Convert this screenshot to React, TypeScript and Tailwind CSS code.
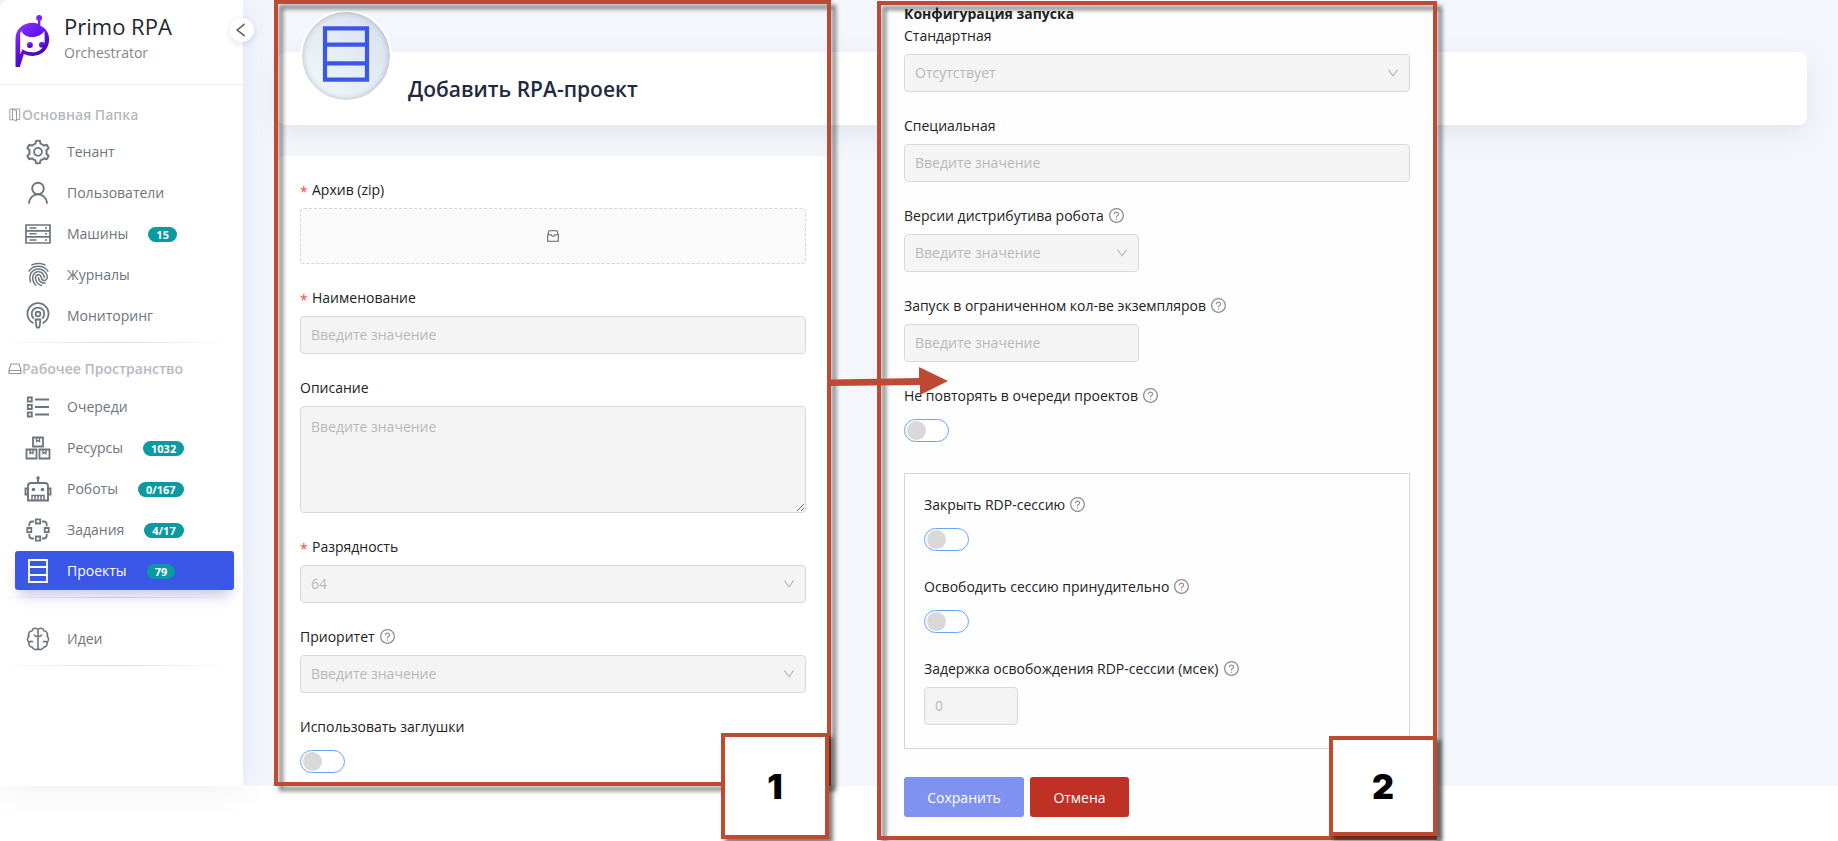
import React from "react";
import type { ReactNode } from "react";
import {
  AiOutlineDown,
  AiOutlineLeft,
  AiOutlineQuestionCircle,
  AiOutlineSetting,
} from "react-icons/ai";
import { IoFingerPrint } from "react-icons/io5";

const stroke = { fill: "none", stroke: "currentColor" } as const;

function Logo() {
  return (
    <svg viewBox="0 0 104 156" className="h-[52px] w-[35px] shrink-0" aria-hidden="true">
      <defs>
        <linearGradient id="logo" x1="0" y1="0" x2="0.5" y2="1">
          <stop offset="0" stopColor="#9a45ff" />
          <stop offset="0.55" stopColor="#6414f2" />
          <stop offset="1" stopColor="#3c05a8" />
        </linearGradient>
      </defs>
      <g fill="url(#logo)">
        <path
          fillRule="evenodd"
          d="M68.500 30V17A9 9 0 1 1 75.500 17V32C92 40 102 54 102 73c0 29-22 50-50 50-9 0-18-2-26-6l-12 39H1V72C1 42 24 23 52 23c6 0 11 1 16.500 3zM15 62v56l7-15c8 6 18 9 30 9 20 0 34-13 36-28 1-12 0-26 0-36C80 60 64 67 50 66 34 66 22 58 19 48c-3 3-4 8-4 14z"
        />
        <circle cx="44" cy="90" r="9" />
        <circle cx="80" cy="89" r="8.500" />
      </g>
    </svg>
  );
}

function UserIcon() {
  return (
    <svg viewBox="0 0 22 24" className="h-6 w-[22px]" strokeWidth="1.900" strokeLinecap="round" {...stroke}>
      <circle cx="11" cy="7.500" r="5.800" />
      <path d="M2 21.800c.6-5 4.400-8.500 9-8.500s8.400 3.500 9 8.500" />
    </svg>
  );
}

function RackIcon() {
  return (
    <svg viewBox="0 0 26 20" className="h-5 w-[26px]" strokeWidth="1.7" {...stroke}>
      <path d="M1 1h24v5.800H1zM1 6.800h24v6H1zM1 12.800h24V19H1z" />
      <path d="M4.500 3.900h7M4.500 9.800h7M4.500 15.900h7M20 3.900h2M20 9.800h2M20 15.900h2" strokeWidth="1.500" />
    </svg>
  );
}

function BeaconIcon() {
  return (
    <svg viewBox="0 0 26 28" className="h-7 w-[26px]" strokeWidth="1.8" {...stroke}>
      <path d="M8.500 21.200a10.500 10.500 0 1 1 9 0" />
      <path d="M8.700 16.500a6.300 6.300 0 1 1 8.600 0" />
      <circle cx="13" cy="12" r="2.400" />
      <path d="M10.600 17.500h4.800l-.8 7c-.3 1.600-2.900 1.600-3.200 0z" />
    </svg>
  );
}

function QueueIcon() {
  return (
    <svg viewBox="0 0 24 24" className="h-6 w-6" strokeWidth="1.8" {...stroke}>
      <path d="M1.800 2.500h4v4h-4zM1.800 10h4v4h-4zM1.800 17.500h4v4h-4z" />
      <path d="M9 4.500h14M9 12h14M9 19.500h14" />
    </svg>
  );
}

function BoxesIcon() {
  return (
    <svg viewBox="0 0 26 24" className="h-6 w-[26px]" strokeWidth="1.8" {...stroke}>
      <path d="M8 1.500h10v9H8zM1.500 13.500h10v9h-10zM14.500 13.500h10v9h-10z" />
      <path d="M11.500 2v3.500L13 4.500l1.500 1V2M5 14v3.500l1.500-1 1.500 1V14M18 14v3.500l1.500-1 1.500 1V14" strokeWidth="1.400" />
    </svg>
  );
}

function RobotIcon() {
  return (
    <svg viewBox="0 0 28 26" className="h-[26px] w-7" strokeWidth="1.9" {...stroke}>
      <path d="M14 2v5M7 7h14a3 3 0 0 1 3 3v14.500H4V10a3 3 0 0 1 3-3zM4 12.500H1.500v6H4M24 12.500h2.500v6H24" />
      <path d="M8 24v-4.500h12V24M11 20v4M14 20v4M17 20v4" strokeWidth="1.500" />
      <circle cx="14" cy="2" r="1.800" fill="currentColor" stroke="none" />
      <circle cx="9.500" cy="13.500" r="1.800" fill="currentColor" stroke="none" />
      <circle cx="18.500" cy="13.500" r="1.800" fill="currentColor" stroke="none" />
    </svg>
  );
}

function FlowIcon() {
  return (
    <svg viewBox="0 0 24 24" className="h-6 w-6" strokeWidth="1.8" {...stroke}>
      <path d="M9.800 1.300h4.400v4.200H9.800zM9.800 18.500h4.400v4.200H9.800zM1.300 10h4v4.200h-4zM18.700 10h4v4.200h-4z" />
      <path d="M8 3.500H6.300a3 3 0 0 0-3 3v1.700M16 3.500h1.700a3 3 0 0 1 3 3v1.700M8 20.500H6.300a3 3 0 0 1-3-3v-1.700M16 20.500h1.700a3 3 0 0 0 3-3v-1.700" />
    </svg>
  );
}

function ProjectIcon({ className }: { className: string }) {
  return (
    <svg viewBox="0 0 20 24" className={className} strokeWidth="1.800" {...stroke}>
      <path d="M1 1h18v22H1zM1 8h18M1 16h18" />
    </svg>
  );
}

function BrainIcon() {
  return (
    <svg viewBox="0 0 24 24" className="h-6 w-6" strokeWidth="1.6" strokeLinecap="round" strokeLinejoin="round" {...stroke}>
      <path d="M12 2.500v20M12 2.500C10.500.5 6.500.7 6 4 3 4 1.800 7 3 9c-2 1.500-2 5 0 6.500-.8 2.600 1 4.500 3.200 4.500.8 3 4.800 3.200 5.800 1.500M12 2.500C13.500.5 17.500.7 18 4c3 0 4.200 3 3 5 2 1.500 2 5 0 6.500.8 2.600-1 4.500-3.200 4.500-.8 3-4.800 3.200-5.800 1.500" />
      <path d="M12 9.500c-2.200 0-3 0-3.700-1.500M12 9.500c2.200 0 3 0 3.700-1.500M3 15.500c1-1 2.500-1.300 3.500-.8M21 15.500c-1-1-2.500-1.300-3.500-.8" />
    </svg>
  );
}

function MapIcon() {
  return (
    <svg viewBox="0 0 12 14" className="h-3.5 w-3" {...stroke}>
      <path d="M4.500 11.800H.8V1h9.900v10.500H7.500M3.500 1l4 2.200v10l-4-2zM7.500 8V2" strokeWidth=".9" />
    </svg>
  );
}

function DriveIcon() {
  return (
    <svg viewBox="0 0 14 12" className="h-3 w-3.5" {...stroke}>
      <path d="M3 1h8l2 6v3.500H1V7zM1 7.500h12" strokeWidth="1.100" />
    </svg>
  );
}

function InboxIcon() {
  return (
    <svg viewBox="0 0 12 12" className="h-3 w-3" {...stroke}>
      <path d="M2 .7h8L11.300 5v6.300H.7V5zM.7 4.700h3.200c.5 2 3.700 2 4.200 0h3.200" strokeWidth="1.100" />
    </svg>
  );
}

type Item = { name: string; icon: ReactNode; badge?: string; active?: boolean };

const folder: Item[] = [
  { name: "Тенант", icon: <AiOutlineSetting size={28} /> },
  { name: "Пользователи", icon: <UserIcon /> },
  { name: "Машины", icon: <RackIcon />, badge: "15" },
  { name: "Журналы", icon: <IoFingerPrint size={25} /> },
  { name: "Мониторинг", icon: <BeaconIcon /> },
];

const workspace: Item[] = [
  { name: "Очереди", icon: <QueueIcon /> },
  { name: "Ресурсы", icon: <BoxesIcon />, badge: "1032" },
  { name: "Роботы", icon: <RobotIcon />, badge: "0/167" },
  { name: "Задания", icon: <FlowIcon />, badge: "4/17" },
  { name: "Проекты", icon: <ProjectIcon className="h-6 w-5" />, badge: "79", active: true },
];

function NavItem({ name, icon, badge, active }: Item) {
  return (
    <li>
      <a
        href="#"
        className={
          "flex h-[39px] items-center rounded-[3px] pl-[9px] " +
          (active ? "bg-[#3b57e7] text-white shadow-[0_10px_14px_-4px_rgba(60,60,160,0.28)]" : "text-[#6d757d]")
        }
      >
        <span className="flex w-7 justify-center">{icon}</span>
        <span className="ml-[15px]">{name}</span>
        {badge && (
          <span className="mt-0.5 ml-5 rounded-full bg-[#0a9aa2] px-2 text-[11px] leading-[15px] font-bold text-white">
            {badge}
          </span>
        )}
      </a>
    </li>
  );
}

function Section({ icon, children }: { icon: ReactNode; children: string }) {
  return (
    <h2 className="flex h-6 items-center pl-2 font-semibold text-[#b3bac1]">
      <span className="flex w-3.5 justify-center pt-0.5 text-[#8f969d]">{icon}</span>
      {children}
    </h2>
  );
}

function Divider() {
  return <div className="mr-3 h-px bg-linear-to-r from-transparent via-[#dcdcdc] to-transparent" />;
}

function Sidebar() {
  return (
    <aside className="relative w-[243px] shrink-0 rounded-tl-lg bg-white shadow-[0_0_32px_rgba(70,70,150,0.10)]">
      <header className="flex h-[85px] items-start gap-3.5 border-b border-[#ececec] pt-[15px] pl-[15px]">
        <Logo />
        <div>
          <h1 className="text-[22px] leading-[22px] font-medium text-[#23272b]">Primo RPA</h1>
          <p className="mt-1.5 leading-5 text-[#858585]">Orchestrator</p>
        </div>
      </header>
      <button
        type="button"
        aria-label="Свернуть меню"
        className="absolute top-[18px] -right-[11px] flex size-6 items-center justify-center rounded-full bg-white pr-0.5 text-[#555] shadow-[0_2px_6px_rgba(70,70,150,0.18)]"
      >
        <AiOutlineLeft size={18} />
      </button>
      <nav className="pt-[17px]">
        <Section icon={<MapIcon />}>Основная Папка</Section>
        <ul className="mt-1.5 mr-[9px] ml-[15px] flex flex-col gap-0.5">
          {folder.map((item) => (
            <NavItem key={item.name} {...item} />
          ))}
        </ul>
        <div className="h-[7px]" />
        <Divider />
        <div className="h-[13px]" />
        <Section icon={<DriveIcon />}>Рабочее Пространство</Section>
        <ul className="mt-[7px] mr-[9px] ml-[15px] flex flex-col gap-0.5">
          {workspace.map((item) => (
            <NavItem key={item.name} {...item} />
          ))}
        </ul>
        <div className="h-[7px]" />
        <Divider />
        <ul className="mt-[21px] mr-[9px] mb-[7px] ml-[15px]">
          <NavItem name="Идеи" icon={<BrainIcon />} />
        </ul>
        <Divider />
      </nav>
    </aside>
  );
}

type FieldProps = {
  id: string;
  label: string;
  required?: boolean;
  help?: boolean;
  children: ReactNode;
};

function Field({ id, label, required, help, children }: FieldProps) {
  return (
    <div className="flex flex-col items-start gap-1.5">
      <label htmlFor={id} className="flex h-6 items-center pb-0.5 text-[#222]">
        {required && <span className="mr-1 w-2 pt-1 text-[#f5484b]">*</span>}
        {label}
        {help && <AiOutlineQuestionCircle size={17} className="ml-1 text-[#8c8c8c]" />}
      </label>
      {children}
    </div>
  );
}

const box =
  "block h-[38px] rounded-[4px] border border-[#d9d9d9] bg-[#f4f4f4] px-2.5 pb-0.5 text-[#b8b8b8] placeholder:text-[#b8b8b8]";

function TextBox({ id, width, placeholder, value }: { id: string; width: string; placeholder?: string; value?: string }) {
  return <input id={id} type="text" disabled placeholder={placeholder} defaultValue={value} className={box + " " + width} />;
}

function Select({ id, width, option }: { id: string; width: string; option: string }) {
  return (
    <div className={"relative " + width}>
      <select id={id} disabled className={box + " w-full appearance-none opacity-100"}>
        <option>{option}</option>
      </select>
      <AiOutlineDown size={14} className="pointer-events-none absolute top-3 right-2.5 text-[#b5b5b5]" />
    </div>
  );
}

function Switch({ id }: { id: string }) {
  return (
    <input
      id={id}
      type="checkbox"
      role="switch"
      disabled
      className="mt-[5px] flex h-[23px] w-[45px] appearance-none items-center rounded-full border border-[#64a5fb] bg-white pl-0.5 before:size-[19px] before:rounded-full before:bg-[#d9d9d9]"
    />
  );
}

function Frame() {
  return (
    <div className="pointer-events-none absolute inset-0 border-4 border-[#bf4a33] drop-shadow-[5px_5px_2px_rgba(0,0,0,0.5)]" />
  );
}

function Marker({ place, children }: { place: string; children: string }) {
  return (
    <div
      className={
        "absolute flex w-[108px] items-center justify-center border-4 border-[#bf4a33] bg-white font-['Inter',sans-serif] text-[34px] font-black text-black shadow-[4px_4px_4px_rgba(0,0,0,0.5)] " +
        place
      }
    >
      {children}
    </div>
  );
}

function ProjectForm() {
  return (
    <form className="flex w-[550px] flex-col gap-[22px] rounded-md bg-white px-[22px] pt-[22px] pb-[13px]">
      <Field id="archive" label="Архив (zip)" required>
        <div className="relative flex h-14 w-full items-center justify-center rounded-[4px] border border-dashed border-[#d5d5d5] bg-[#fafafa] text-[#666]">
          <InboxIcon />
          <input id="archive" type="file" accept=".zip" className="absolute inset-0 opacity-0" />
        </div>
      </Field>
      <Field id="name" label="Наименование" required>
        <TextBox id="name" width="w-full" placeholder="Введите значение" />
      </Field>
      <Field id="description" label="Описание">
        <textarea
          id="description"
          disabled
          placeholder="Введите значение"
          className="block h-[107px] w-full resize-y rounded-[4px] border border-[#d9d9d9] bg-[#f4f4f4] px-2.5 py-[9px] placeholder:text-[#b8b8b8]"
        />
      </Field>
      <Field id="bits" label="Разрядность" required>
        <Select id="bits" width="w-full" option="64" />
      </Field>
      <Field id="priority" label="Приоритет" help>
        <Select id="priority" width="w-full" option="Введите значение" />
      </Field>
      <Field id="stubs" label="Использовать заглушки">
        <Switch id="stubs" />
      </Field>
    </form>
  );
}

function LaunchForm() {
  return (
    <form className="absolute top-px left-[877px] w-[560px] bg-[#fefefe] px-[27px] pt-[3px] pb-[23px]">
      <h3 className="h-5 leading-5 font-bold text-[#222]">Конфигурация запуска</h3>
      <div className="flex flex-col gap-[22px]">
        <Field id="standard" label="Стандартная">
          <Select id="standard" width="w-full" option="Отсутствует" />
        </Field>
        <Field id="special" label="Специальная">
          <TextBox id="special" width="w-full" placeholder="Введите значение" />
        </Field>
        <Field id="versions" label="Версии дистрибутива робота" help>
          <Select id="versions" width="w-[235px]" option="Введите значение" />
        </Field>
        <Field id="limit" label="Запуск в ограниченном кол-ве экземпляров" help>
          <TextBox id="limit" width="w-[235px]" placeholder="Введите значение" />
        </Field>
        <Field id="repeat" label="Не повторять в очереди проектов" help>
          <Switch id="repeat" />
        </Field>
      </div>
      <fieldset className="mt-[31px] flex flex-col gap-6 border border-[#d6d6d6] px-[19px] pt-[19px] pb-[23px]">
        <Field id="close" label="Закрыть RDP-сессию" help>
          <Switch id="close" />
        </Field>
        <Field id="release" label="Освободить сессию принудительно" help>
          <Switch id="release" />
        </Field>
        <Field id="delay" label="Задержка освобождения RDP-сессии (мсек)" help>
          <TextBox id="delay" width="w-[94px]" value="0" />
        </Field>
      </fieldset>
      <div className="mt-7 flex gap-1.5 text-white">
        <button type="submit" className="h-10 w-[120px] rounded-[3px] bg-[#7f92f0]">
          Сохранить
        </button>
        <button type="button" className="h-10 w-[99px] rounded-[3px] bg-[#bf3124]">
          Отмена
        </button>
      </div>
      <Frame />
      <Marker place="right-0 bottom-1 h-[100px]">2</Marker>
    </form>
  );
}

export default function App() {
  return (
    <div className="relative min-h-screen bg-white pb-[55px] font-['Open_Sans','Noto_Sans',sans-serif] text-[14px]">
      <div className="flex bg-[#f4f6fb]">
        <Sidebar />
        <main className="min-w-0 grow pt-[52px] pr-[31px] pl-[35px]">
          <header className="relative flex h-[73px] items-center rounded-lg bg-white pl-[130px] shadow-[0_8px_26px_rgba(70,80,140,0.10)]">
            <span className="absolute -top-[42px] left-[22px] flex size-[92px] items-center justify-center rounded-full border-2 border-white bg-linear-to-tr from-[#f1fafc] to-[#d8deee] text-[#3b57e7] shadow-[inset_0_0_6px_rgba(0,0,0,0.25)]">
              <ProjectIcon className="mb-1 h-14 w-12" />
            </span>
            <h2 className="text-[21px] leading-7 font-semibold text-[#1f2a40]">Добавить RPA-проект</h2>
          </header>
          <div className="mt-[31px]">
            <ProjectForm />
          </div>
        </main>
      </div>
      <div className="pointer-events-none absolute top-0 bottom-[55px] left-[274px] w-[557px]">
        <Frame />
      </div>
      <Marker place="top-[733px] left-[721px] h-[106px]">1</Marker>
      <LaunchForm />
      <svg viewBox="0 0 118 30" className="absolute top-[366px] left-[830px] h-[30px] w-[118px] fill-[#bf4a33]" aria-hidden="true">
        <path d="M0 13.500 89 12V1l29 14L90 29V19L0 20z" />
      </svg>
    </div>
  );
}
